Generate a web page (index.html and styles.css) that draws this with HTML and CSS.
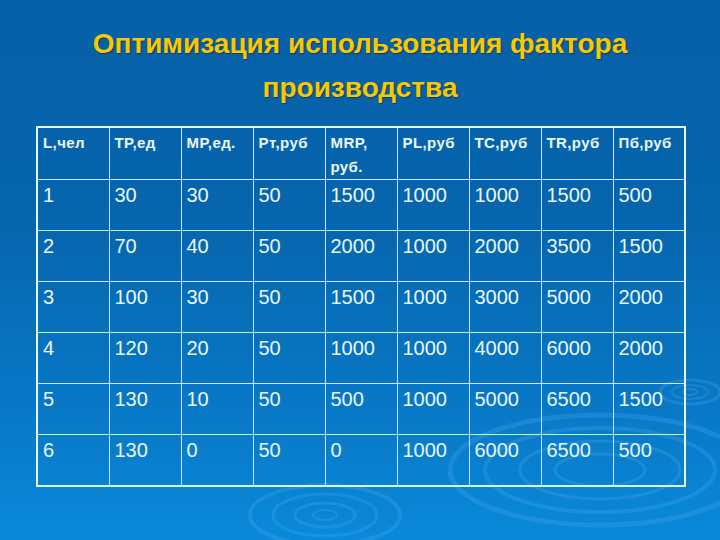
FILE: index.html
```html
<!DOCTYPE html>
<html lang="ru">
<head>
<meta charset="utf-8">
<link rel="stylesheet" href="styles.css">
</head>
<body>
<div class="slide">
  <svg class="ripples" width="720" height="540" viewBox="0 0 720 540">
    <g fill="none" stroke="#5ab4f4" stroke-opacity="0.22">
      <ellipse cx="690" cy="392" rx="30" ry="12" stroke-width="3"/>
      <ellipse cx="690" cy="392" rx="18" ry="7" stroke-width="2"/>
      <ellipse cx="690" cy="392" rx="7" ry="3" stroke-width="2"/>
      <ellipse cx="600" cy="470" rx="150" ry="55" stroke-width="5"/>
      <ellipse cx="600" cy="470" rx="115" ry="42" stroke-width="4"/>
      <ellipse cx="600" cy="470" rx="80" ry="29" stroke-width="3"/>
      <ellipse cx="600" cy="470" rx="45" ry="16" stroke-width="3"/>
      <ellipse cx="325" cy="515" rx="75" ry="30" stroke-width="4"/>
      <ellipse cx="325" cy="515" rx="52" ry="21" stroke-width="3"/>
      <ellipse cx="325" cy="515" rx="30" ry="12" stroke-width="3"/>
      <ellipse cx="325" cy="515" rx="12" ry="5" stroke-width="2"/>
    </g>
  </svg>
  <h1 class="title">Оптимизация использования фактора<br>производства</h1>
  <table class="grid">
    <colgroup>
      <col><col><col><col><col><col><col><col><col>
    </colgroup>
    <thead>
      <tr>
        <th>L,чел</th><th>TP,ед</th><th>MP,ед.</th><th>Рт,руб</th><th>MRP, руб.</th><th>PL,руб</th><th>TC,руб</th><th>TR,руб</th><th>Пб,руб</th>
      </tr>
    </thead>
    <tbody>
      <tr><td>1</td><td>30</td><td>30</td><td>50</td><td>1500</td><td>1000</td><td>1000</td><td>1500</td><td>500</td></tr>
      <tr><td>2</td><td>70</td><td>40</td><td>50</td><td>2000</td><td>1000</td><td>2000</td><td>3500</td><td>1500</td></tr>
      <tr><td>3</td><td>100</td><td>30</td><td>50</td><td>1500</td><td>1000</td><td>3000</td><td>5000</td><td>2000</td></tr>
      <tr><td>4</td><td>120</td><td>20</td><td>50</td><td>1000</td><td>1000</td><td>4000</td><td>6000</td><td>2000</td></tr>
      <tr><td>5</td><td>130</td><td>10</td><td>50</td><td>500</td><td>1000</td><td>5000</td><td>6500</td><td>1500</td></tr>
      <tr><td>6</td><td>130</td><td>0</td><td>50</td><td>0</td><td>1000</td><td>6000</td><td>6500</td><td>500</td></tr>
    </tbody>
  </table>
</div>
</body>
</html>
```
FILE: styles.css
```css
html, body {
  margin: 0;
  padding: 0;
}
body {
  width: 720px;
  height: 540px;
  overflow: hidden;
  font-family: "Liberation Sans", Arial, sans-serif;
}
.slide {
  position: relative;
  width: 720px;
  height: 540px;
  box-sizing: border-box;
  padding-top: 22px;
  background: linear-gradient(to bottom, #0660a7 0%, #0665ad 40%, #0878c6 75%, #0a89da 100%);
}
.ripples {
  position: absolute;
  left: 0;
  top: 0;
  z-index: 0;
}
.title {
  position: relative;
  z-index: 1;
  margin: 0;
  text-align: center;
  font-size: 28px;
  line-height: 44px;
  font-weight: bold;
  color: #f8c800;
  text-shadow: 1px 1px 1px #163a66;
}
.grid {
  position: relative;
  z-index: 1;
  margin: 16px 0 0 36px;
  width: 648px;
  table-layout: fixed;
  border-collapse: collapse;
  border: 2px solid #e2f7ff;
  color: #eaf7ff;
}
.grid col {
  width: 72px;
}
.grid th,
.grid td {
  border: 1px solid #c4ecff;
  text-align: left;
  vertical-align: top;
  padding: 0 3px 0 5px;
}
.grid th {
  height: 52px;
  box-sizing: border-box;
  padding-top: 3px;
  font-size: 15px;
  letter-spacing: 0.4px;
  line-height: 24px;
  font-weight: bold;
}
.grid td {
  height: 51px;
  box-sizing: border-box;
  padding-top: 4px;
  font-size: 20px;
  line-height: 23px;
  font-weight: normal;
}
```
